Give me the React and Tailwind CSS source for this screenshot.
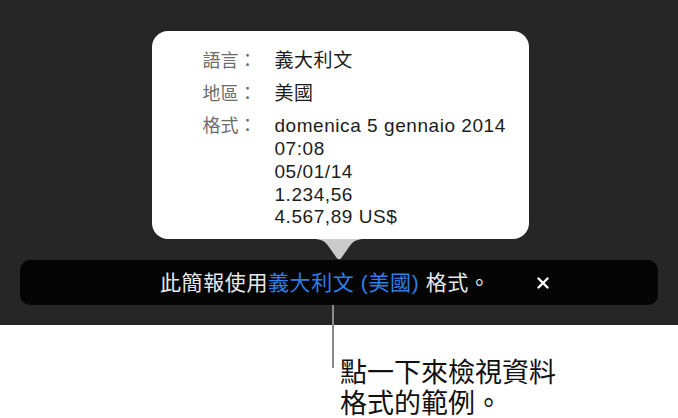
import React from "react";

const FONT = { fontFamily: '"Liberation Sans", "Noto Sans CJK TC", sans-serif' };

const rows = [
  { label: "語言：", lines: ["義大利文"] },
  { label: "地區：", lines: ["美國"] },
  {
    label: "格式：",
    lines: ["domenica 5 gennaio 2014", "07:08", "05/01/14", "1.234,56", "4.567,89 US$"],
  },
];

function FormatPopover() {
  return (
    <div className="relative w-[377px] h-[208px] rounded-[16px] bg-white pt-[19px] pl-[51px]">
      <div className="flex flex-col gap-[10px]">
        {rows.map((row) => (
          <div key={row.label} className="flex">
            <div className="w-[72px] text-[18px] leading-[22.7px] text-[#6d6d6d]">{row.label}</div>
            <div className="flex flex-col text-[19px] tracking-[0.55px] leading-[22.7px] text-[#1c1c1c]">
              {row.lines.map((line) => (
                <span key={line}>{line}</span>
              ))}
            </div>
          </div>
        ))}
      </div>
      {/* pointer */}
      <svg
        className="absolute left-[161px] top-[208px]"
        width="52"
        height="21"
        viewBox="0 0 52 21"
      >
        <path d="M0 0 C8 0 12 2 16 8 L23 18 C25 21 27 21 29 18 L36 8 C40 2 44 0 52 0 Z" fill="#cbcbcb" />
      </svg>
    </div>
  );
}

export default function App() {
  return (
    <div className="w-[678px] h-[418px] bg-white overflow-hidden" style={FONT}>
      <div className="h-[325px] bg-[#262626] flex flex-col">
        <div className="flex justify-center pt-[31px] pl-[2px]">
          <FormatPopover />
        </div>
        <div className="mt-[21px] mx-[20px] h-[45px] rounded-[10px] bg-[#050505] flex items-center">
          <div className="pl-[140px] text-[21px] tracking-[0.6px] text-[#e8e8e8] whitespace-nowrap">
            此簡報使用<span className="text-[#2f7ee6]">義大利文 (美國)</span> 格式。
          </div>
          <button className="ml-[46px] w-[14px] h-[14px] flex items-center justify-center">
            <svg width="12" height="12" viewBox="0 0 12 12">
              <path d="M1.5 1.5 L10.5 10.5 M10.5 1.5 L1.5 10.5" stroke="#ffffff" strokeWidth="2.4" strokeLinecap="round" />
            </svg>
          </button>
        </div>
        <div className="ml-[332px] w-[2px] h-[20px] bg-[#8a8a8a]" />
      </div>
      <div className="flex">
        <div className="ml-[332px] w-[2px] h-[43px] bg-[#8a8a8a]" />
        <div className="ml-[6px] pt-[33px] text-[27px] leading-[31px] text-[#111111]">
          點一下來檢視資料
          <br />
          格式的範例。
        </div>
      </div>
    </div>
  );
}
